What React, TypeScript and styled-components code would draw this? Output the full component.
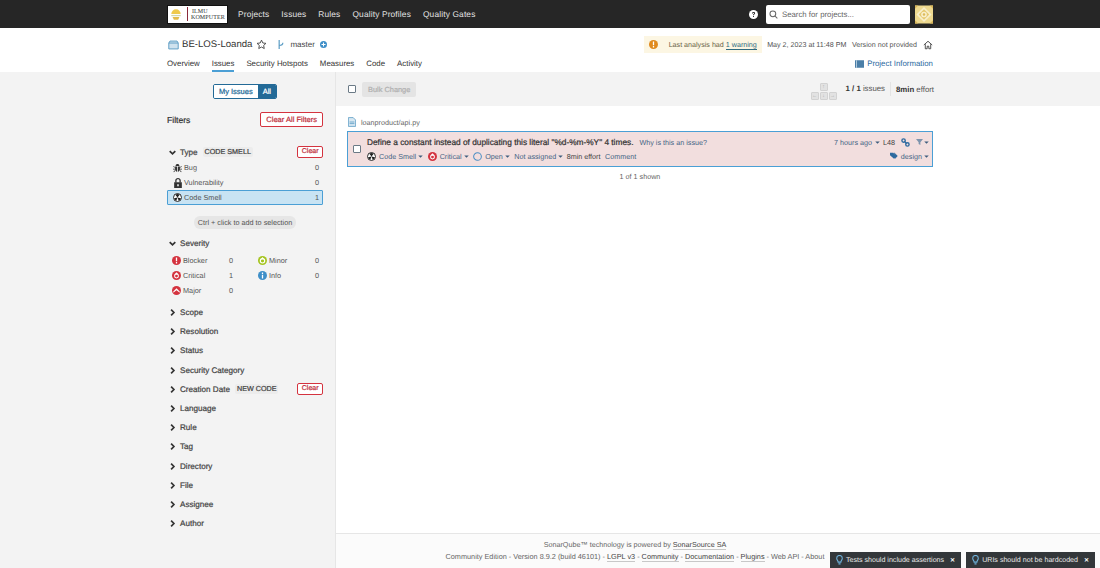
import React from 'react'
import styled, { createGlobalStyle, css } from 'styled-components'

const GlobalStyle = createGlobalStyle`
  html, body { margin: 0; padding: 0; background: #fff; }
  body {
    font-family: "Liberation Sans", Arial, sans-serif;
    color: #444;
    text-rendering: geometricPrecision;
  }
  * { box-sizing: border-box; }
`

// the screenshot's headings sit between regular and bold
const semiBold = css`
  font-weight: 400;
  -webkit-text-stroke: 0.22px currentColor;
`

const BugIcon = () => (
  <svg width="9" height="10" viewBox="0 0 14 14" fill="#333">
    <path d="M4 3.800C4.200 1.800 5.500 .8 7 .8s2.800 1 3 3zM3.200 4.800h3.200v8.200C4.200 12.600 3.200 10.800 3.200 9zM7.600 4.800h3.200V9c0 1.800-1 3.600-3.200 4z" />
    <path d="M0 5.200l1-1 2.200 1.400v1.200zM14 5.200l-1-1-2.200 1.400v1.200zM0 8.200h3.200v1.100H0zM14 8.200h-3.200v1.100H14zM.6 13l2.600-3v1.600L1.500 13.800zM13.400 13l-2.600-3v1.600l1.700 2.200z" />
  </svg>
)

const LockIcon = () => (
  <svg width="8" height="10" viewBox="0 0 10 13" fill="#333">
    <path d="M0 5.600h10V13H0zM4 8v2.600h2V8z" fillRule="evenodd" />
    <path d="M1.400 6V3.400C1.400 1.400 3 0 5 0s3.600 1.400 3.600 3.400V6H6.900V3.400C6.900 2.300 6 1.600 5 1.600S3.100 2.300 3.100 3.400V6z" />
  </svg>
)

const SmellIcon = () => (
  <svg width="9" height="9" viewBox="0 0 14 14">
    <circle cx="7" cy="7" r="6.200" fill="#fff" stroke="#222" strokeWidth="1.500" />
    <path d="M7 7 3.600 2.800A5.400 5.400 0 0 1 10.400 2.800zM7 7l5.300 1.100a5.400 5.400 0 0 1-3.400 4zM7 7l-1.900 5.100a5.400 5.400 0 0 1-3.400-4z" fill="#222" />
  </svg>
)

const SeverityIcon = ({ kind }: { kind: string }) => {
  if (kind === 'blocker') {
    return (
      <svg width="9" height="9" viewBox="0 0 14 14">
        <circle cx="7" cy="7" r="7" fill="#d4333f" />
        <path d="M6 2.500h2v5.500H6zM6 9.500h2v2H6z" fill="#fff" />
      </svg>
    )
  }
  if (kind === 'critical') {
    return (
      <svg width="9" height="9" viewBox="0 0 14 14">
        <circle cx="7" cy="7" r="7" fill="#d4333f" />
        <circle cx="7" cy="7.800" r="3" fill="none" stroke="#fff" strokeWidth="1.600" />
        <path d="M7 1.800 10.200 5.400H3.800z" fill="#fff" />
      </svg>
    )
  }
  if (kind === 'major') {
    return (
      <svg width="9" height="9" viewBox="0 0 14 14">
        <circle cx="7" cy="7" r="7" fill="#d4333f" />
        <path d="M7 3.500 12 8.500v2L7 6.500l-5 4v-2z" fill="#fff" />
      </svg>
    )
  }
  if (kind === 'minor') {
    return (
      <svg width="9" height="9" viewBox="0 0 14 14">
        <circle cx="7" cy="7" r="7" fill="#a5c41f" />
        <circle cx="7" cy="7.500" r="3.400" fill="none" stroke="#fff" strokeWidth="1.800" />
        <path d="M7 1.500 9.500 5h-5z" fill="#fff" />
      </svg>
    )
  }
  return (
    <svg width="9" height="9" viewBox="0 0 14 14">
      <circle cx="7" cy="7" r="7" fill="#3f8fc8" />
      <path d="M6 2.500h2v2H6zM6 6h2v5.500H6z" fill="#fff" />
    </svg>
  )
}

const Chevron = ({ open }: { open?: boolean }) => (
  <svg width="7" height="7" viewBox="0 0 10 10" fill="none" stroke="#333" strokeWidth="2.400">
    {open ? <path d="M1 3l4 4 4-4" /> : <path d="M3 1l4 4-4 4" />}
  </svg>
)

const Caret = () => (
  <svg width="5" height="3" viewBox="0 0 6 4" fill="#3d5c7d">
    <path d="M0 .5h6L3 3.800z" />
  </svg>
)

const navItems = ['Projects', 'Issues', 'Rules', 'Quality Profiles', 'Quality Gates']
const tabs = ['Overview', 'Issues', 'Security Hotspots', 'Measures', 'Code', 'Activity']
const closedFacets = ['Scope', 'Resolution', 'Status', 'Security Category', 'Creation Date', 'Language', 'Rule', 'Tag', 'Directory', 'File', 'Assignee', 'Author']
const severities = [
  { kind: 'blocker', name: 'Blocker', count: 0 },
  { kind: 'minor', name: 'Minor', count: 0 },
  { kind: 'critical', name: 'Critical', count: 1 },
  { kind: 'info', name: 'Info', count: 0 },
  { kind: 'major', name: 'Major', count: 0 }
]

const App = () => {
  return (
    <Page>
      <GlobalStyle />
      <NavBar>
        <Logo>
          <svg width="12" height="13" viewBox="0 0 14 15">
            <path d="M1.500 7a5.500 5.500 0 0 1 11 0z" fill="#efc94c" />
            <path d="M1.500 8h11v1.500h-11z" fill="#cfd6a8" />
            <path d="M3 10.500h8l-1.500 3h-5z" fill="#e3bb4a" />
          </svg>
          <LogoBar />
          <LogoText>
            <span>ILMU</span>
            <span>KOMPUTER</span>
          </LogoText>
        </Logo>
        <NavLinks>
          {navItems.map((item) => (
            <NavLink key={item}>{item}</NavLink>
          ))}
        </NavLinks>
        <NavRight>
          <svg width="9" height="9" viewBox="0 0 14 14">
            <circle cx="7" cy="7" r="7" fill="#fff" />
            <path d="M4.600 5.300C4.700 3.900 5.700 3 7.100 3c1.400 0 2.400.8 2.400 2 0 1-.6 1.500-1.300 2-.5.3-.6.6-.6 1.200H6.200c0-1 .3-1.500 1-2 .5-.3.8-.6.8-1.100 0-.5-.4-.8-.9-.8-.6 0-1 .4-1 1zM6.200 9.300h1.500v1.600H6.200z" fill="#262626" />
          </svg>
          <SearchBox>
            <svg width="9" height="9" viewBox="0 0 14 14" fill="none" stroke="#666" strokeWidth="1.600">
              <circle cx="6" cy="6" r="4.500" />
              <path d="M9.500 9.500 13 13" />
            </svg>
            <span>Search for projects...</span>
          </SearchBox>
          <Avatar>
            <svg width="18" height="19" viewBox="0 0 19 19">
              <rect width="19" height="19" fill="#eed98f" />
              <path d="M9.500 1.500 17.500 9.500 9.500 17.500 1.500 9.500z" fill="#f8efcb" />
              <path d="M9.500 4 15 9.500 9.500 15 4 9.500z" fill="#e6c96f" />
              <circle cx="9.500" cy="9.500" r="3" fill="#f8efcb" />
              <circle cx="9.500" cy="9.500" r="1.300" fill="#dcb95a" />
              <path d="M0 0h3.500L0 3.500zM19 0h-3.500L19 3.500zM0 19h3.500L0 15.500zM19 19h-3.500l3.500-3.500z" fill="#d9b65a" />
            </svg>
          </Avatar>
        </NavRight>
      </NavBar>

      <ProjectHeader>
        <ProjectTop>
          <ProjectLeft>
            <svg width="11" height="10" viewBox="0 0 14 12" fill="#cfe2ee" stroke="#5b9cc4" strokeWidth="1.200">
              <path d="M1 3.500 2.500 1h9L13 3.500V11H1zM1 3.500h12" />
            </svg>
            <ProjectName>BE-LOS-Loanda</ProjectName>
            <svg width="11" height="11" viewBox="0 0 24 24" fill="none" stroke="#444" strokeWidth="2">
              <path d="M12 2.500l2.900 6.200 6.800.8-5 4.600 1.300 6.700-6-3.300-6 3.300 1.300-6.700-5-4.600 6.800-.8z" />
            </svg>
            <BranchIcon>
              <svg width="8" height="11" viewBox="0 0 8 12" fill="none" stroke="#5b9cc4" strokeWidth="1.300">
                <path d="M2 1v10M2 7c3 0 4-1 4-3" />
              </svg>
            </BranchIcon>
            <BranchName>master</BranchName>
            <svg width="7" height="7" viewBox="0 0 14 14">
              <circle cx="7" cy="7" r="7" fill="#3f8fc8" />
              <path d="M6 3h2v3h3v2H8v3H6V8H3V6h3z" fill="#fff" />
            </svg>
          </ProjectLeft>
          <ProjectMeta>
            <Warning>
              <WarningIcon>
                <svg width="9" height="9" viewBox="0 0 14 14">
                  <circle cx="7" cy="7" r="7" fill="#e08a1e" />
                  <path d="M6 2.500h2v5.500H6zM6 9.500h2v2H6z" fill="#fff" />
                </svg>
              </WarningIcon>
              <span>Last analysis had <WarningLink>1 warning</WarningLink></span>
            </Warning>
            <MetaText>May 2, 2023 at 11:48 PM</MetaText>
            <MetaText>Version not provided</MetaText>
            <HomeIcon>
              <svg width="10" height="10" viewBox="0 0 24 24" fill="none" stroke="#444" strokeWidth="2.200">
                <path d="M2 12 12 3l10 9M5.500 10v11h4.500v-6h4v6h4.500V10" />
              </svg>
            </HomeIcon>
          </ProjectMeta>
        </ProjectTop>
        <ProjectTabs>
          <TabList>
            {tabs.map((tab) => (
              <Tab key={tab} $active={tab === 'Issues'}>{tab}</Tab>
            ))}
          </TabList>
          <InfoLink>
            <svg width="9" height="8" viewBox="0 0 12 10">
              <rect width="12" height="10" fill="#4b7fa8" />
              <path d="M2 0v10" stroke="#cfe0ec" strokeWidth="1" />
            </svg>
            Project Information
          </InfoLink>
        </ProjectTabs>
      </ProjectHeader>

      <Body>
        <Sidebar>
          <SidebarInner>
            <Toggle>
              <ToggleItem>My Issues</ToggleItem>
              <ToggleItem $active>All</ToggleItem>
            </Toggle>
            <FilterHead>
              <FilterTitle>Filters</FilterTitle>
              <ClearAll>Clear All Filters</ClearAll>
            </FilterHead>

            <FacetHead>
              <Chevron open />
              <FacetName>Type</FacetName>
              <FacetTag>CODE SMELL</FacetTag>
              <ClearSmall>Clear</ClearSmall>
            </FacetHead>
            <TypeList>
              <TypeRow>
                <TypeLabel><IconSlot><BugIcon /></IconSlot>Bug</TypeLabel>
                <span>0</span>
              </TypeRow>
              <TypeRow>
                <TypeLabel><IconSlot><LockIcon /></IconSlot>Vulnerability</TypeLabel>
                <span>0</span>
              </TypeRow>
              <TypeRow $selected>
                <TypeLabel><IconSlot><SmellIcon /></IconSlot>Code Smell</TypeLabel>
                <span>1</span>
              </TypeRow>
            </TypeList>
            <HintWrap>
              <Hint>Ctrl + click to add to selection</Hint>
            </HintWrap>

            <FacetHead $plain>
              <Chevron open />
              <FacetName>Severity</FacetName>
            </FacetHead>
            <SeverityGrid>
              {severities.map((s) => (
                <SeverityRow key={s.kind}>
                  <TypeLabel><IconSlot><SeverityIcon kind={s.kind} /></IconSlot>{s.name}</TypeLabel>
                  <span>{s.count}</span>
                </SeverityRow>
              ))}
            </SeverityGrid>

            <ClosedList>
              {closedFacets.map((facet) => (
                <ClosedFacet key={facet}>
                  <Chevron />
                  <FacetName>{facet}</FacetName>
                  {facet === 'Creation Date' && <FacetTag>NEW CODE</FacetTag>}
                  {facet === 'Creation Date' && <ClearSmall>Clear</ClearSmall>}
                </ClosedFacet>
              ))}
            </ClosedList>
          </SidebarInner>
        </Sidebar>

        <Main>
          <Toolbar>
            <Checkbox />
            <BulkButton>Bulk Change</BulkButton>
            <ToolbarRight>
              <Keys>
                <KeyCap>↑</KeyCap>
                <KeyRow>
                  <KeyCap>←</KeyCap>
                  <KeyCap>↓</KeyCap>
                  <KeyCap>→</KeyCap>
                </KeyRow>
              </Keys>
              <Paging><b>1 / 1</b> issues</Paging>
              <Effort><b>8min</b> effort</Effort>
            </ToolbarRight>
          </Toolbar>

          <Content>
            <FilePath>
              <svg width="8" height="10" viewBox="0 0 10 12" fill="#d8e8f2" stroke="#5b9cc4" strokeWidth="1">
                <path d="M.5.500h6l3 3v8H.500z" />
                <path d="M2 6h6M2 8h6" />
              </svg>
              loanproduct/api.py
            </FilePath>
            <IssueCard>
              <Checkbox />
              <IssueBody>
                <IssueRow>
                  <IssueTitle>Define a constant instead of duplicating this literal "%d-%m-%Y" 4 times.</IssueTitle>
                  <IssueLink>Why is this an issue?</IssueLink>
                  <IssueRight>
                    <IssueLink>7 hours ago</IssueLink>
                    <Caret />
                    <LineNo>L48</LineNo>
                    <svg width="9" height="9" viewBox="0 0 14 14" fill="none" stroke="#2d6a9f" strokeWidth="2.200">
                      <circle cx="4" cy="4" r="2.600" />
                      <circle cx="10" cy="10" r="2.600" />
                      <path d="M5.500 5.500l3 3" />
                    </svg>
                    <FilterGlyph>
                      <svg width="7" height="8" viewBox="0 0 12 12" fill="#7d94ad">
                        <path d="M0 1h12L7.500 6.500V11l-3-1.500v-3z" />
                      </svg>
                      <Caret />
                    </FilterGlyph>
                  </IssueRight>
                </IssueRow>
                <IssueRow $second>
                  <MetaItem><SmellIcon />Code Smell<Caret /></MetaItem>
                  <MetaItem><SeverityIcon kind="critical" />Critical<Caret /></MetaItem>
                  <MetaItem>
                    <svg width="9" height="9" viewBox="0 0 14 14" fill="none" stroke="#4b8fc4" strokeWidth="1.600">
                      <circle cx="7" cy="7" r="6" />
                    </svg>
                    Open<Caret />
                  </MetaItem>
                  <MetaItem>Not assigned<Caret /></MetaItem>
                  <EffortText>8min effort</EffortText>
                  <IssueLink>Comment</IssueLink>
                  <TagGroup>
                    <svg width="8" height="8" viewBox="0 0 14 11" fill="#2d6a9f">
                      <path d="M0 0h5.500L12 5.500 7 10.500 0 4zM8 0l5.500 5.500-4.500 5-1-.8L11.500 5.500 6.500 0z" />
                    </svg>
                    <IssueLink>design</IssueLink>
                    <Caret />
                  </TagGroup>
                </IssueRow>
              </IssueBody>
            </IssueCard>
            <Shown>1 of 1 shown</Shown>
          </Content>

          <Footer>
            <FooterLine>SonarQube™ technology is powered by <FooterLink>SonarSource SA</FooterLink></FooterLine>
            <FooterLine $wide>
              Community Edition - Version 8.9.2 (build 46101) - <FooterLink>LGPL v3</FooterLink> - <FooterLink>Community</FooterLink> - <FooterLink>Documentation</FooterLink> - <FooterLink>Plugins</FooterLink> - Web API - About
            </FooterLine>
          </Footer>
        </Main>
      </Body>

      <Toasts>
        {['Tests should include assertions', 'URIs should not be hardcoded'].map((t) => (
          <Toast key={t}>
            <svg width="7" height="10" viewBox="0 0 10 14" fill="none" stroke="#6fb3dc" strokeWidth="1.500">
              <path d="M3 10c0-2-2-3-2-5.500a4 4 0 0 1 8 0C9 7 7 8 7 10zM3.500 12.500h3" />
            </svg>
            <ToastText>{t}</ToastText>
            <ToastClose>✕</ToastClose>
          </Toast>
        ))}
      </Toasts>
    </Page>
  )
}

const Page = styled.div`
  position: relative;
  width: 1100px;
  height: 568px;
  overflow: hidden;
  display: flex;
  flex-direction: column;
  font-size: 8px;
`
const NavBar = styled.div`
  height: 28px;
  background: #262626;
  display: flex;
  align-items: center;
  padding: 0 167px;
`
const Logo = styled.div`
  width: 61px;
  height: 19px;
  background: #fff;
  border: 1px solid #111;
  display: flex;
  align-items: center;
  padding: 0 2px;
`
const LogoBar = styled.div`
  width: 1px;
  height: 14px;
  background: #8a2a3c;
  margin: 0 3px 0 5px;
`
const LogoText = styled.div`
  display: flex;
  flex-direction: column;
  font-family: "Liberation Serif", serif;
  font-size: 6px;
  line-height: 6px;
  letter-spacing: 0.1px;
  color: #333;
  padding-top: 2px;
  span:first-child { padding-left: 1px; }
`
const NavLinks = styled.div`
  display: flex;
  gap: 12px;
  margin-left: 10px;
`
const NavLink = styled.span`
  color: #e2e2e2;
  font-size: 8.35px;
  letter-spacing: 0.15px;
`
const NavRight = styled.div`
  margin-left: auto;
  display: flex;
  align-items: center;
`
const SearchBox = styled.div`
  width: 144px;
  height: 19px;
  margin-left: 8px;
  background: #fff;
  border-radius: 2px;
  display: flex;
  align-items: center;
  gap: 4px;
  padding-left: 3px;
  font-size: 7.8px;
  color: #666;
`
const Avatar = styled.div`
  width: 18px;
  height: 19px;
  margin-left: 5px;
  svg { display: block; }
`
const ProjectHeader = styled.div`
  height: 44px;
  background: #fff;
  padding: 0 167px;
  display: flex;
  flex-direction: column;
`
const ProjectTop = styled.div`
  height: 26px;
  padding-top: 7px;
  display: flex;
  align-items: center;
  justify-content: space-between;
`
const ProjectLeft = styled.div`
  display: flex;
  align-items: center;
  padding-left: 1px;
`
const ProjectName = styled.span`
  font-size: 9.6px;
  color: #333;
  margin: 0 4px 0 3px;
`
const BranchIcon = styled.span`
  margin-left: 10px;
  display: flex;
`
const BranchName = styled.span`
  font-size: 8px;
  margin: 0 5px;
  color: #444;
`
const ProjectMeta = styled.div`
  display: flex;
  align-items: center;
`
const Warning = styled.div`
  height: 17px;
  width: 118px;
  display: flex;
  align-items: center;
  background: #fcf6e3;
  color: #6b6347;
  font-size: 7.15px;
  white-space: nowrap;
`
const WarningIcon = styled.span`
  width: 20px;
  display: flex;
  justify-content: center;
  margin-right: 5px;
`
const WarningLink = styled.span`
  color: #2f6b80;
  border-bottom: 1px solid #2f6b80;
`
const MetaText = styled.span`
  font-size: 7.15px;
  color: #555;
  margin-left: 5.5px;
  white-space: nowrap;
`
const HomeIcon = styled.span`
  display: flex;
  margin-left: 6px;
`
const ProjectTabs = styled.div`
  flex: 1;
  display: flex;
  justify-content: space-between;
  align-items: flex-start;
  padding-top: 5px;
`
const TabList = styled.div`
  display: flex;
  gap: 12px;
`
const Tab = styled.span<{ $active?: boolean }>`
  font-size: 7.85px;
  color: #333;
  height: 13px;
  line-height: 10px;
  border-bottom: ${(p) => (p.$active ? '2px solid #4b9fd5' : 'none')};
`
const InfoLink = styled.span`
  display: flex;
  align-items: center;
  gap: 3px;
  font-size: 7.85px;
  color: #2d6a9f;
  line-height: 10px;
`
const Body = styled.div`
  flex: 1;
  display: flex;
  min-height: 0;
`
const Sidebar = styled.div`
  width: 336px;
  background: #f3f3f3;
  border-right: 1px solid #e6e6e6;
  padding: 0 12px 0 167px;
`
const SidebarInner = styled.div`
  display: flex;
  flex-direction: column;
`
const Toggle = styled.div`
  align-self: center;
  display: flex;
  margin-top: 12px;
  height: 15px;
  border: 1px solid #236a97;
  border-radius: 2px;
  overflow: hidden;
`
const ToggleItem = styled.span<{ $active?: boolean }>`
  padding: 0 5px;
  font-size: 7.5px;
  ${semiBold}
  line-height: 13px;
  background: ${(p) => (p.$active ? '#236a97' : '#fff')};
  color: ${(p) => (p.$active ? '#fff' : '#236a97')};
`
const FilterHead = styled.div`
  display: flex;
  justify-content: space-between;
  align-items: center;
  margin-top: 13px;
`
const FilterTitle = styled.span`
  font-size: 8.6px;
  ${semiBold}
  color: #333;
`
const ClearAll = styled.span`
  height: 15px;
  line-height: 13px;
  padding: 0 5px;
  border: 1px solid #d4333f;
  border-radius: 2px;
  background: #fff;
  font-size: 7.55px;
  ${semiBold}
  color: #c0303c;
`
const FacetHead = styled.div<{ $plain?: boolean }>`
  display: flex;
  align-items: center;
  height: 14px;
  margin-top: ${(p) => (p.$plain ? '7px' : '18px')};
  padding-left: 2px;
`
const FacetName = styled.span`
  font-size: 8.1px;
  ${semiBold}
  color: #444;
  margin-left: 4px;
`
const FacetTag = styled.span`
  margin-left: 5px;
  background: #ececec;
  border-radius: 2px;
  padding: 0 2px;
  font-size: 7.2px;
  ${semiBold}
  color: #444;
  line-height: 10px;
`
const ClearSmall = styled.span`
  margin-left: auto;
  height: 12px;
  line-height: 10px;
  padding: 0 3.5px;
  border: 1px solid #d4333f;
  border-radius: 2px;
  background: #fff;
  font-size: 7px;
  ${semiBold}
  color: #c0303c;
`
const TypeList = styled.div`
  margin-top: 1px;
  display: flex;
  flex-direction: column;
`
const TypeRow = styled.div<{ $selected?: boolean }>`
  height: 15px;
  display: flex;
  align-items: center;
  justify-content: space-between;
  padding: 0 3px;
  font-size: 7.3px;
  color: #555;
  border-radius: 1px;
  border: 1px solid ${(p) => (p.$selected ? '#4b9fd5' : 'transparent')};
  background: ${(p) => (p.$selected ? '#c8e3f3' : 'transparent')};
`
const TypeLabel = styled.span`
  display: flex;
  align-items: center;
`
const IconSlot = styled.span`
  width: 13px;
  display: flex;
  align-items: center;
  justify-content: center;
`
const HintWrap = styled.div`
  display: flex;
  justify-content: center;
  margin-top: 11px;
`
const Hint = styled.span`
  height: 13px;
  line-height: 13px;
  padding: 0 4px;
  border-radius: 6px;
  background: #e6e6e6;
  color: #555;
  font-size: 7.25px;
`
const SeverityGrid = styled.div`
  display: grid;
  grid-template-columns: 1fr 1fr;
  column-gap: 16px;
  margin-top: 3px;
`
const SeverityRow = styled.div`
  height: 15px;
  display: flex;
  align-items: center;
  justify-content: space-between;
  padding: 0 4px 0 3px;
  font-size: 7.3px;
  color: #555;
`
const ClosedList = styled.div`
  margin-top: 5px;
  display: flex;
  flex-direction: column;
`
const ClosedFacet = styled.div`
  height: 19.2px;
  display: flex;
  align-items: center;
  padding-left: 2px;
`
const Main = styled.div`
  flex: 1;
  min-width: 0;
  display: flex;
  flex-direction: column;
`
const Toolbar = styled.div`
  height: 34px;
  background: #f3f3f3;
  display: flex;
  align-items: center;
  padding: 0 166px 0 12px;
`
const Checkbox = styled.span`
  flex: none;
  width: 8px;
  height: 8px;
  border: 1px solid #6b7a86;
  border-radius: 1px;
  background: #fff;
`
const BulkButton = styled.span`
  margin-left: 6px;
  height: 15px;
  line-height: 15px;
  padding: 0 6px;
  background: #e4e4e4;
  border-radius: 2px;
  color: #b0b0b0;
  font-size: 7.4px;
  ${semiBold}
`
const ToolbarRight = styled.div`
  margin-left: auto;
  display: flex;
  align-items: center;
  font-size: 7.8px;
  color: #555;
`
const Keys = styled.div`
  display: flex;
  flex-direction: column;
  align-items: center;
  gap: 1px;
  margin: 5px 9px 0 0;
`
const KeyCap = styled.span`
  width: 8px;
  height: 8px;
  background: #e2e2e2;
  border: 1px solid #d2d2d2;
  border-radius: 1px;
  color: #aaa;
  font-size: 5px;
  line-height: 6px;
  text-align: center;
`
const KeyRow = styled.div`
  display: flex;
  gap: 1px;
`
const Paging = styled.span`
  padding-right: 5px;
  border-right: 1px solid #e4e4e4;
  line-height: 14px;
  b { color: #333; }
`
const Effort = styled.span`
  margin-left: 5px;
  b { color: #333; }
`
const Content = styled.div`
  flex: 1;
  padding: 10px 167px 0 11px;
  background: #fff;
`
const FilePath = styled.div`
  display: flex;
  align-items: center;
  gap: 5px;
  height: 12px;
  font-size: 7.2px;
  color: #666;
  padding-left: 1px;
`
const IssueCard = styled.div`
  margin-top: 3px;
  height: 36px;
  background: #f2dede;
  border: 1px solid #4b9fd5;
  display: flex;
  align-items: center;
  padding: 0 3px 0 5px;
  gap: 6px;
`
const IssueBody = styled.div`
  flex: 1;
  display: flex;
  flex-direction: column;
  gap: 3px;
`
const IssueRow = styled.div<{ $second?: boolean }>`
  display: flex;
  align-items: center;
  height: 11px;
  gap: ${(p) => (p.$second ? '4.5px' : '6px')};
`
const IssueTitle = styled.span`
  font-size: 8.3px;
  ${semiBold}
  color: #333;
  white-space: nowrap;
`
const IssueLink = styled.span`
  font-size: 7.2px;
  color: #456585;
  white-space: nowrap;
`
const IssueRight = styled.div`
  margin-left: auto;
  display: flex;
  align-items: center;
  gap: 3px;
`
const TagGroup = styled(IssueRight)`
  gap: 2px;
  svg:first-child { margin-right: 1px; }
`
const LineNo = styled.span`
  font-size: 7.2px;
  color: #444;
  margin-right: 3px;
`
const FilterGlyph = styled.span`
  display: flex;
  align-items: center;
  gap: 1px;
  margin-left: 3px;
`
const MetaItem = styled.span`
  display: flex;
  align-items: center;
  gap: 2px;
  font-size: 7.2px;
  color: #456585;
  white-space: nowrap;
  svg:first-child { margin-right: 1px; }
`
const EffortText = styled.span`
  font-size: 7.2px;
  color: #444;
  margin-left: -2px;
`
const Shown = styled.div`
  margin-top: 5px;
  text-align: center;
  font-size: 7.2px;
  color: #666;
`
const Footer = styled.div`
  height: 35px;
  border-top: 1px solid #e6e6e6;
  background: #fbfbfb;
  padding: 5px 166px 0 0;
  text-align: center;
  font-size: 7.2px;
  color: #666;
`
const FooterLine = styled.div<{ $wide?: boolean }>`
  line-height: 11.5px;
  font-size: ${(p) => (p.$wide ? '7.3px' : '7.2px')};
`
const FooterLink = styled.span`
  color: #444;
  border-bottom: 1px solid #c8c8c8;
`
const Toasts = styled.div`
  position: absolute;
  right: 5px;
  bottom: 0;
  display: flex;
  gap: 5px;
`
const Toast = styled.div`
  height: 16px;
  background: #33373a;
  color: #e8e8e8;
  display: flex;
  align-items: center;
  padding: 0 6px;
  font-size: 7.1px;
`
const ToastText = styled.span`
  margin-left: 3px;
`
const ToastClose = styled.span`
  margin-left: 6px;
  font-size: 6px;
  font-weight: 700;
  color: #fff;
`

export default App
